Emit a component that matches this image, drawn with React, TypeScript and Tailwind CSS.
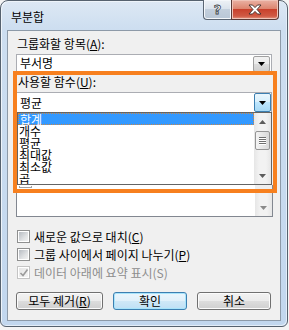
import React from "react";

const items = ["합계", "개수", "평균", "최대값", "최소값", "곱"];

function Arrow({ up, color = "#000" }: { up?: boolean; color?: string }) {
  return (
    <svg width="7" height="4" viewBox="0 0 7 4">
      <path d={up ? "M0 4 L3.5 0 L7 4 Z" : "M0 0 L7 0 L3.5 4 Z"} fill={color} />
    </svg>
  );
}

function Accel({ k }: { k: string }) {
  return <span className="underline underline-offset-[1px] decoration-1">{k}</span>;
}

function CheckBox({ checked, disabled }: { checked?: boolean; disabled?: boolean }) {
  return (
    <span
      className={`relative w-[13px] h-[13px] shrink-0 border bg-white flex items-center justify-center ${
        disabled ? "border-[#c4c4c4]" : "border-[#8e8f8f]"
      }`}
    >
      <span
        className={`w-[9px] h-[9px] ${
          disabled
            ? "bg-[linear-gradient(135deg,#e6e6e6,#f4f4f4)]"
            : "bg-[linear-gradient(135deg,#b7bcc2,#dfe1e3_60%,#f2f2f2)]"
        }`}
      />
      {checked && (
        <svg className="absolute left-[1px] top-[1px]" width="10" height="10" viewBox="0 0 10 10">
          <path d="M1.5 5 L4 7.5 L8.5 1.5" fill="none" stroke="#9b9b9b" strokeWidth="1.6" />
        </svg>
      )}
    </span>
  );
}

function Btn({ children, w, focus }: { children: React.ReactNode; w: string; focus?: boolean }) {
  return (
    <div
      className={`${w} h-[18px] rounded-[3px] border flex items-center justify-center leading-none ${
        focus
          ? "border-[#3c7fb1] bg-[linear-gradient(#eaf6fd_0%,#e0f0fa_50%,#cfe8f7_50%,#bfe0f5_100%)] shadow-[inset_0_0_0_1px_#a8e4fb]"
          : "border-[#707070] bg-[linear-gradient(#f2f2f2_0%,#ebebeb_50%,#dddddd_50%,#cfcfcf_100%)] shadow-[inset_0_0_0_1px_#fbfbfb]"
      }`}
    >
      {children}
    </div>
  );
}

function Thumb() {
  return (
    <div className="ml-px w-[15px] h-[19px] rounded-[2px] border border-[#959595] bg-[linear-gradient(90deg,#f4f4f4,#e6e6e6_50%,#d9d9d9)] flex flex-col items-center justify-center gap-px">
      {[0, 1, 2, 3].map((i) => (
        <span key={i} className="w-[7px] h-px bg-[#6f6f6f] shadow-[0_1px_0_#ffffff]" />
      ))}
    </div>
  );
}

export default function App() {
  return (
    <div className="w-[289px] h-[330px] bg-[#f4f4f4] overflow-hidden text-[12px] text-black font-['Noto_Sans_CJK_KR','Noto_Sans',sans-serif]">
      <div className="w-[288px] h-[327px] rounded-t-[8px] rounded-b-[6px] border border-[#56626f] bg-[linear-gradient(180deg,#dde8f4_0px,#cddef0_28px,#c2d7ee_100%)] shadow-[inset_1px_1px_0_#eef4fa,inset_-1px_-1px_0_#e3edf8] flex flex-col">
        {/* title bar */}
        <div className="h-[29px] flex items-start">
          <div className="pl-[10px] pt-[9px] leading-[14px]">부분합</div>
          <div className="ml-auto mr-[8px] -mt-px flex">
            <div className="w-[28px] h-[20px] rounded-bl-[4px] border border-r-0 border-t-0 border-[#5b6673] bg-[linear-gradient(#eef2f6_0%,#dbe3ec_45%,#c3cfdc_50%,#b9c7d6_100%)] shadow-[inset_0_0_0_1px_#f4f7fa] flex items-center justify-center">
              <span className="text-[13px] font-bold leading-none text-white [-webkit-text-stroke:0.8px_#3a3f46] font-['DejaVu_Sans',sans-serif]">?</span>
            </div>
            <div className="w-[48px] h-[20px] rounded-br-[4px] border border-t-0 border-[#5b3a36] bg-[linear-gradient(#eab2a4_0%,#dd8670_45%,#c9412c_50%,#d05a44_85%,#e69a86_100%)] shadow-[inset_0_0_0_1px_#f0c4b8] flex items-center justify-center">
              <svg width="14" height="11" viewBox="0 0 14 11">
                <path
                  d="M1 1 H4.5 L7 3.6 L9.5 1 H13 L9 5.5 L13 10 H9.5 L7 7.4 L4.5 10 H1 L5 5.5 Z"
                  fill="#ffffff"
                  stroke="#3b2a28"
                  strokeWidth="0.9"
                  strokeLinejoin="round"
                />
              </svg>
            </div>
          </div>
        </div>

        {/* client */}
        <div className="mx-[6px] mb-[5px] flex-1 border border-[#8d9aa8] bg-[#f0f0f0] flex flex-col">
          <div className="ml-[9px] mt-[7px] h-[12px] leading-[12px]">
            그룹화할 항목(<Accel k="A" />):
          </div>

          <div className="ml-[8px] mt-[4px] w-[256px] h-[17px] border border-b-0 border-[#abadb3] bg-white flex items-center">
            <span className="pl-[3px] flex-1 leading-[12px]">부서명</span>
            <div className="mr-px w-[17px] h-[16px] mt-px border border-[#a0a0a0] rounded-[2px] bg-[linear-gradient(#f2f2f2_0%,#ebebeb_50%,#dddddd_50%,#cfcfcf_100%)] flex items-center justify-center">
              <Arrow />
            </div>
          </div>

          {/* highlighted area */}
          <div className="ml-[5px] w-[264px] h-[122px] border-4 border-[#f7801f] flex flex-col">
            <div className="pl-px pt-px h-[13px] leading-[12px]">
              사용할 함수(<Accel k="U" />):
            </div>
            <div className="mt-[4px] w-[255px] h-[20px] border-t border-r border-[#abadb3] bg-white flex items-center">
              <span className="pl-[3px] flex-1 leading-[12px]">평균</span>
              <div className="w-[17px] h-[19px] border border-[#3c7fb1] rounded-[2px] bg-[linear-gradient(#eaf6fd_0%,#d9f0fc_45%,#bee6fd_50%,#a7d9f5_100%)] flex items-center justify-center">
                <Arrow />
              </div>
            </div>
            <div className="w-[255px] h-[73px] border border-[#646464] bg-white flex overflow-hidden">
              <div className="flex-1 flex flex-col">
                {items.map((t, i) => (
                  <div
                    key={t}
                    className={`h-[12px] shrink-0 leading-[12px] pl-px ${
                      i === 0 ? "bg-[#3399ff] text-white border border-dotted border-[#c8874a] pl-0" : ""
                    }`}
                  >
                    {t}
                  </div>
                ))}
              </div>
              <div className="w-[17px] bg-[linear-gradient(90deg,#e6e6e6,#f2f2f2_30%,#f2f2f2_70%,#e6e6e6)] flex flex-col">
                <div className="h-[17px] flex items-center justify-center">
                  <Arrow up color="#5c5c5c" />
                </div>
                <div className="mt-px">
                  <Thumb />
                </div>
                <div className="mt-auto h-[17px] flex items-center justify-center">
                  <Arrow color="#5c5c5c" />
                </div>
              </div>
            </div>
            <div className="h-[4px] flex">
              <div className="flex-1 bg-white">
                <div className="ml-[2px] mt-px w-[13px] h-[2px] border border-t-0 border-[#a0a0a0]" />
              </div>
              <div className="w-[17px] bg-[#eeeeee]" />
              <div className="w-px bg-[#828790]" />
            </div>
          </div>

          <div className="ml-[8px] w-[257px] h-[24px] border border-t-0 border-[#828790] bg-white flex">
            <div className="flex-1" />
            <div className="w-[17px] bg-[linear-gradient(90deg,#e6e6e6,#f2f2f2_30%,#f2f2f2_70%,#e6e6e6)] flex flex-col">
              <div className="mt-auto h-[17px] flex items-center justify-center">
                <Arrow color="#8a8a8a" />
              </div>
            </div>
          </div>

          <div className="ml-[9px] mt-[13px] h-[13px] flex items-center gap-[4px]">
            <CheckBox />
            <span className="leading-[12px]">
              새로운 값으로 대치(<Accel k="C" />)
            </span>
          </div>
          <div className="ml-[9px] mt-[5px] h-[13px] flex items-center gap-[4px]">
            <CheckBox />
            <span className="leading-[12px]">
              그룹 사이에서 페이지 나누기(<Accel k="P" />)
            </span>
          </div>
          <div className="ml-[9px] mt-[5px] h-[13px] flex items-center gap-[4px]">
            <CheckBox checked disabled />
            <span className="leading-[12px] text-[#8d8d8d]">데이터 아래에 요약 표시(S)</span>
          </div>

          <div className="ml-[8px] mt-[13px] flex gap-[10px]">
            <Btn w="w-[87px]">
              모두 제거(<Accel k="R" />)
            </Btn>
            <Btn w="w-[74px]" focus>
              확인
            </Btn>
            <Btn w="w-[74px]">취소</Btn>
          </div>
        </div>
      </div>
    </div>
  );
}
